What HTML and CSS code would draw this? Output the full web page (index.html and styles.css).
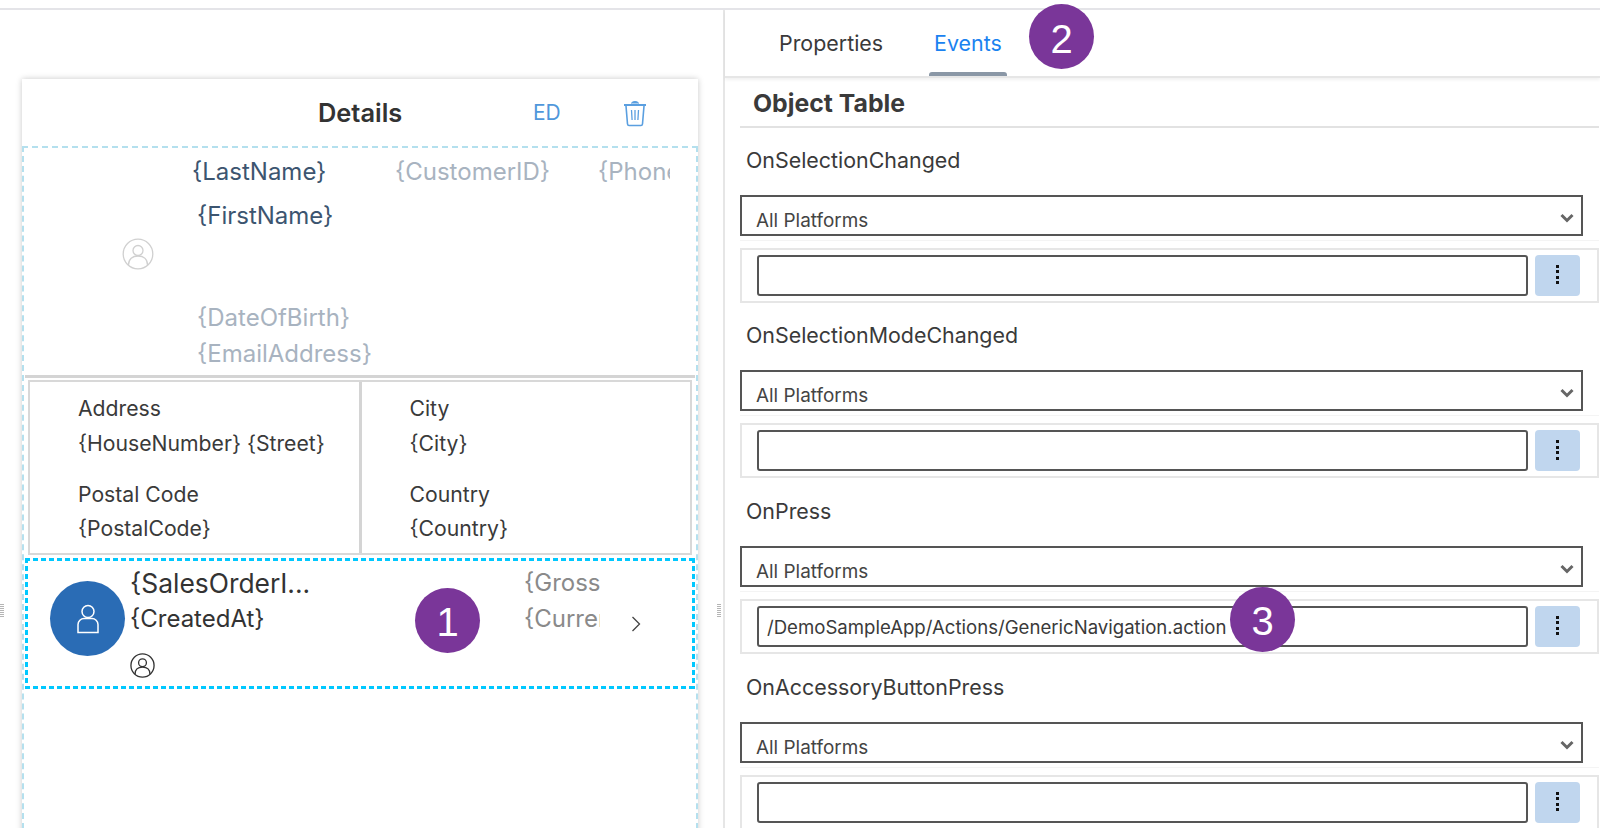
FILE: index.html
```html
<!DOCTYPE html>
<html lang="en">

<head>
  <meta charset="UTF-8">
  <meta name="viewport" content="width=device-width, initial-scale=1.0">
  <title>Page Editor</title>
  <link rel="stylesheet" href="styles.css">
</head>

<body>
  <div class="workspace">
    <!-- Page canvas -->
    <section class="canvas">
      <span class="handle handle-left"></span>
      <span class="handle handle-right"></span>

      <div class="card">
        <header class="card-header">
          <h2 class="card-title">Details</h2>
          <span class="edit-link">ED</span>
          <svg class="trash-icon" viewBox="0 0 24 28" fill="none" stroke="#5a9fe0">
            <path d="M1 6h22" stroke-width="2" />
            <path d="M8.500 4.500q0-2 3.500-2t3.500 2" fill="#5a9fe0" stroke-width="1" />
            <path d="M3 7l1.500 18q.2 1.500 1.500 1.500h12q1.300 0 1.500-1.500L21 7" stroke-width="1.600" />
            <path d="M8.500 11l.6 10M12 11v10M15.500 11l-.6 10" stroke-width="1.300" />
          </svg>
        </header>

        <div class="card-body">
          <div class="hero">
            <div class="hero-top">
              <span class="hero-name">{LastName}</span>
              <span class="hero-sub hero-id">{CustomerID}</span>
              <span class="hero-sub hero-phone">{PhoneNumber}</span>
            </div>
            <div class="hero-main">
              <div class="hero-avatar">
                <svg class="person-circle person-circle-light" viewBox="0 0 32 32" fill="none">
                  <circle cx="16" cy="16" r="14.800" />
                  <circle cx="16" cy="12.500" r="5" />
                  <path d="M6.500 27c0-6 4-9 9.500-9s9.500 3 9.500 9" />
                </svg>
              </div>
              <div class="hero-text">
                <div class="hero-name first-name">{FirstName}</div>
                <div class="hero-sub birth-date">{DateOfBirth}</div>
                <div class="hero-sub email">{EmailAddress}</div>
              </div>
            </div>
          </div>

          <div class="info-grid">
            <div class="info-col">
              <div class="info-item">
                <div>Address</div>
                <div>{HouseNumber} {Street}</div>
              </div>
              <div class="info-item">
                <div>Postal Code</div>
                <div>{PostalCode}</div>
              </div>
            </div>
            <div class="info-col">
              <div class="info-item">
                <div>City</div>
                <div>{City}</div>
              </div>
              <div class="info-item">
                <div>Country</div>
                <div>{Country}</div>
              </div>
            </div>
          </div>

          <div class="table-row">
            <div class="row-avatar">
              <svg class="person-icon" viewBox="0 0 24 30" fill="none" stroke="#fff" stroke-width="1.500">
                <circle cx="12" cy="7.500" r="6" />
                <path d="M2 28.500v-8c0-3.500 3-6 6-6h8c3 0 6 2.500 6 6v8z" />
              </svg>
            </div>
            <div class="row-main">
              <div class="row-title">{SalesOrderI...</div>
              <div class="row-subtitle">{CreatedAt}</div>
              <svg class="person-circle person-circle-dark" viewBox="0 0 32 32" fill="none">
                <circle cx="16" cy="16" r="14.800" />
                <circle cx="16" cy="12.500" r="5" />
                <path d="M6.500 27c0-6 4-9 9.500-9s9.500 3 9.500 9" />
              </svg>
            </div>
            <div class="row-side">
              <div class="row-side-text">{GrossAmount}</div>
              <div class="row-side-text">{CurrencyCode}</div>
            </div>
            <svg class="row-chevron" viewBox="0 0 10 18" fill="none" stroke="#444" stroke-width="1.300">
              <path d="M1.500 2l7 7-7 7" />
            </svg>
            <span class="badge badge-one">1</span>
          </div>
        </div>
      </div>
    </section>

    <!-- Properties pane -->
    <aside class="pane">
      <nav class="tabs">
        <a class="tab">Properties</a>
        <a class="tab tab-active">Events</a>
        <span class="badge badge-two">2</span>
      </nav>

      <div class="pane-body">
        <h3 class="pane-title">Object Table</h3>

        <div class="event">
          <div class="event-label">OnSelectionChanged</div>
          <div class="select-wrap">
            <div class="platform-select">
              <span>All Platforms</span>
              <svg class="select-arrow" viewBox="0 0 14 10" fill="none" stroke="#666" stroke-width="3">
                <path d="M1.500 2l5.500 5.500 5.500-5.500" />
              </svg>
            </div>
          </div>
          <div class="action-box">
            <div class="action-input"></div>
            <button class="action-btn"><span class="dots"></span></button>
          </div>
        </div>

        <div class="event">
          <div class="event-label">OnSelectionModeChanged</div>
          <div class="select-wrap">
            <div class="platform-select">
              <span>All Platforms</span>
              <svg class="select-arrow" viewBox="0 0 14 10" fill="none" stroke="#666" stroke-width="3">
                <path d="M1.500 2l5.500 5.500 5.500-5.500" />
              </svg>
            </div>
          </div>
          <div class="action-box">
            <div class="action-input"></div>
            <button class="action-btn"><span class="dots"></span></button>
          </div>
        </div>

        <div class="event">
          <div class="event-label">OnPress</div>
          <div class="select-wrap">
            <div class="platform-select">
              <span>All Platforms</span>
              <svg class="select-arrow" viewBox="0 0 14 10" fill="none" stroke="#666" stroke-width="3">
                <path d="M1.500 2l5.500 5.500 5.500-5.500" />
              </svg>
            </div>
          </div>
          <div class="action-box">
            <div class="action-input">/DemoSampleApp/Actions/GenericNavigation.action</div>
            <button class="action-btn"><span class="dots"></span></button>
            <span class="badge badge-three">3</span>
          </div>
        </div>

        <div class="event">
          <div class="event-label">OnAccessoryButtonPress</div>
          <div class="select-wrap">
            <div class="platform-select">
              <span>All Platforms</span>
              <svg class="select-arrow" viewBox="0 0 14 10" fill="none" stroke="#666" stroke-width="3">
                <path d="M1.500 2l5.500 5.500 5.500-5.500" />
              </svg>
            </div>
          </div>
          <div class="action-box">
            <div class="action-input"></div>
            <button class="action-btn"><span class="dots"></span></button>
          </div>
        </div>
      </div>
    </aside>
  </div>
</body>

</html>
```

FILE: styles.css
```css
/* Global Styles */
* {
  box-sizing: border-box;
}

html,
body {
  height: 100%;
}

body {
  font-family: 'Inter', 'Liberation Sans', sans-serif;
  background: #ffffff;
  color: #3a3a3a;
  margin: 0;
  padding: 8px 0 0;
  overflow: hidden;
}

.workspace {
  display: flex;
  height: 820px;
  border-top: 2px solid #e4e4e8;
}

/* Canvas */
.canvas {
  position: relative;
  width: 723px;
  padding: 69px 25px 0 22px;
  flex-shrink: 0;
}

.handle {
  position: absolute;
  top: 594px;
  width: 4px;
  height: 13px;
  background: repeating-linear-gradient(to bottom, #b5b5b5 0 1px, #ffffff 1px 2px);
}

.handle-left {
  left: 0;
}

.handle-right {
  right: 2px;
}

.card {
  height: 760px;
  background: #ffffff;
  box-shadow: 0 0 6px rgba(0, 0, 0, 0.22);
}

.card-header {
  display: flex;
  align-items: center;
  height: 67px;
  padding-left: 296px;
}

.card-title {
  margin: 0;
  width: 215px;
  font-size: 25.400px;
  font-weight: 600;
  color: #333333;
}

.edit-link {
  width: 90px;
  font-size: 21px;
  color: #4f97db;
}

.trash-icon {
  width: 24px;
  height: 28px;
}

.card-body {
  height: 693px;
  border: 2px dashed #b4e0ee;
  padding: 0 1px;
}

/* Header block */
.hero {
  height: 230px;
  border-bottom: 3px solid #d4d4d4;
}

.hero-top {
  display: flex;
  align-items: center;
  height: 46px;
  padding-left: 167px;
}

.hero-name {
  font-size: 24px;
  color: #3c5570;
}

.hero-sub {
  font-size: 24px;
  color: #a8b3c0;
}

.hero-top .hero-name {
  width: 203px;
  flex-shrink: 0;
}

.hero-id {
  width: 203px;
  flex-shrink: 0;
}

.hero-phone {
  width: 72px;
  overflow: hidden;
  white-space: nowrap;
}

.hero-main {
  display: flex;
}

.hero-avatar {
  width: 172px;
  padding: 44px 0 0 97px;
}

.person-circle {
  display: block;
  stroke-width: 1.300;
}

.person-circle-light {
  width: 32px;
  height: 32px;
  stroke: #d0d0d0;
}

.person-circle-dark {
  width: 25px;
  height: 25px;
  stroke: #333333;
  stroke-width: 1.700;
}

.first-name {
  line-height: 44px;
}

.birth-date {
  margin-top: 62px;
  line-height: 36px;
}

.email {
  line-height: 36px;
}

/* Address grid */
.info-grid {
  display: flex;
  height: 175px;
  margin: 2px 3px 0;
  border: 2px solid #d8d8d8;
}

.info-col {
  flex: 1;
  padding: 9px 0 0 48px;
  font-size: 21.200px;
  line-height: 34.500px;
}

.info-col:first-child {
  border-right: 3px solid #d4d4d4;
}

.info-item {
  height: 85.500px;
  white-space: nowrap;
}

/* Selected row */
.table-row {
  position: relative;
  display: flex;
  height: 131px;
  margin-top: 3px;
  padding: 23px 0 0 25px;
  background:
    repeating-linear-gradient(to right, #00c8ff 0 5px, transparent 5px 8px) top / 100% 3px no-repeat,
    repeating-linear-gradient(to right, #00c8ff 0 5px, transparent 5px 8px) bottom / 100% 3px no-repeat,
    repeating-linear-gradient(to bottom, #00c8ff 0 5px, transparent 5px 8px) left / 3px 100% no-repeat,
    repeating-linear-gradient(to bottom, #00c8ff 0 5px, transparent 5px 8px) right / 3px 100% no-repeat;
}

.row-avatar {
  display: flex;
  align-items: center;
  justify-content: center;
  width: 75px;
  height: 75px;
  border-radius: 50%;
  background: #2a6cb5;
  flex-shrink: 0;
}

.person-icon {
  width: 24px;
  height: 30px;
}

.row-main {
  width: 399px;
  margin-top: -20px;
  padding-left: 5px;
  flex-shrink: 0;
}

.row-title {
  font-size: 26.400px;
  line-height: 44px;
  color: #333333;
}

.row-subtitle {
  margin-top: -1px;
  font-size: 24px;
  line-height: 30px;
  color: #333333;
}

.row-main .person-circle {
  margin-top: 19px;
}

.row-side {
  width: 76px;
  margin-top: -20px;
  padding-top: 4px;
  overflow: hidden;
  white-space: nowrap;
  flex-shrink: 0;
}

.row-side-text {
  font-size: 24px;
  line-height: 36px;
  color: #8a8a8a;
}

.row-chevron {
  width: 10px;
  height: 18px;
  margin: 34px 0 0 31px;
}

.badge {
  position: absolute;
  display: flex;
  align-items: center;
  justify-content: center;
  width: 65px;
  height: 65px;
  padding-top: 4px;
  border-radius: 50%;
  background: #7a3699;
  color: #ffffff;
  font-family: 'Liberation Sans', sans-serif;
  font-size: 40px;
  z-index: 2;
}

.badge-one {
  left: 390px;
  top: 30px;
}

/* Properties pane */
.pane {
  flex: 1;
  border-left: 2px solid #e6e6e6;
}

.tabs {
  position: relative;
  display: flex;
  height: 68px;
  padding-left: 54px;
  border-bottom: 2px solid #e6e6e6;
  box-shadow: 0 2px 3px rgba(0, 0, 0, 0.06);
  font-size: 21.400px;
  line-height: 66px;
}

.tab {
  position: relative;
  margin-right: 51px;
  color: #3a3a3a;
}

.tab-active {
  color: #1a82f0;
}

/* Underline sits over the tab bar's bottom border */
.tab-active::after {
  content: "";
  position: absolute;
  left: -5px;
  right: -5px;
  top: 62px;
  height: 4px;
  background: #8a97a6;
  border-radius: 3px 3px 0 0;
}

.badge-two {
  left: 304px;
  top: -6px;
}

.pane-body {
  padding: 0 1px 0 15px;
}

.pane-title {
  margin: 0;
  height: 50px;
  padding-left: 13px;
  border-bottom: 2px solid #e2e2e2;
  font-size: 24.800px;
  font-weight: 700;
  line-height: 50px;
  color: #3a3a3a;
}

/* Event blocks */
.event {
  height: 176px;
  padding-top: 15px;
}

.event:nth-child(2) {
  height: 175px;
}

.event-label {
  padding-left: 6px;
  font-size: 21.400px;
  line-height: 34px;
  color: #3a3a3a;
}

.select-wrap {
  margin-top: 18px;
  padding-bottom: 4px;
  border-bottom: 1px solid #f4f4f4;
}

.platform-select {
  display: flex;
  align-items: center;
  justify-content: space-between;
  width: 843px;
  height: 41px;
  padding: 9px 7px 0 14px;
  border: 2px solid #555555;
  font-size: 18.900px;
  color: #444444;
}

.select-arrow {
  width: 14px;
  height: 10px;
  margin-bottom: 5px;
}

.action-box {
  position: relative;
  display: flex;
  height: 55px;
  margin-top: 7px;
  padding: 5px 17px 0 15px;
  border: 2px solid #e6e6e6;
}

.action-input {
  flex: 1;
  height: 41px;
  padding-left: 8px;
  border: 2px solid #555555;
  border-radius: 3px;
  font-size: 18.600px;
  line-height: 39px;
  color: #3a3a3a;
}

.action-btn {
  display: flex;
  align-items: center;
  justify-content: center;
  width: 45px;
  height: 41px;
  margin-left: 7px;
  padding: 0;
  background: #c0d6ee;
  border: none;
  border-radius: 4px;
}

.dots {
  display: block;
  width: 3px;
  height: 22px;
  background: repeating-linear-gradient(to bottom, #111111 0 3px, transparent 3px 5.500px);
}

.badge-three {
  left: 488px;
  top: -14px;
}
```
